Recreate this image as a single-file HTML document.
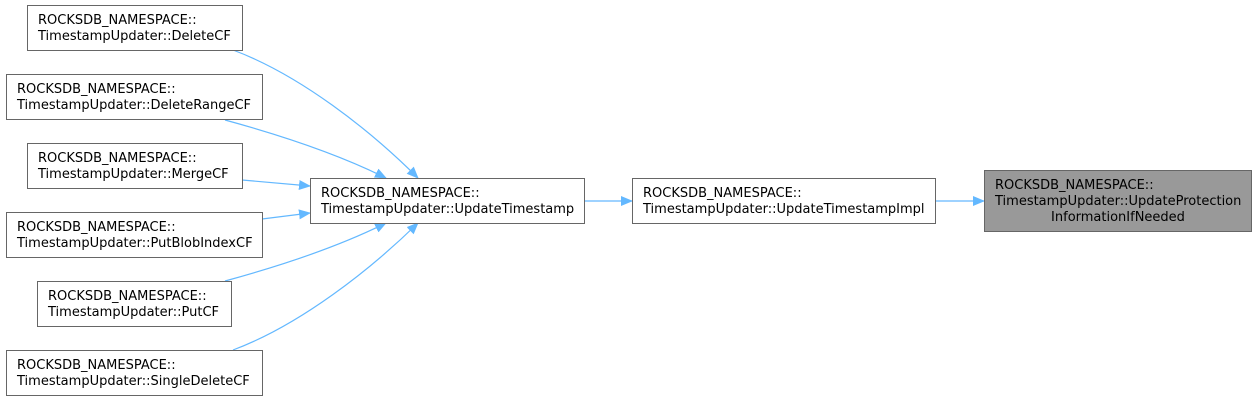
<!DOCTYPE html>
<html><head><meta charset="utf-8"><style>
html,body{margin:0;padding:0;background:#fff;}
svg text{font-family:"DejaVu Sans","Liberation Sans",sans-serif;font-size:13px;fill:#000;}
</style></head><body>
<svg width="1257" height="402" viewBox="0 0 1257 402" xmlns="http://www.w3.org/2000/svg">
<defs><marker id="a" markerWidth="12" markerHeight="12" refX="11" refY="6" orient="auto" markerUnits="userSpaceOnUse"><path d="M0,1 L12,6 L0,11 Z" fill="#63b8ff"/></marker></defs>
<g fill="none" stroke="#63b8ff" stroke-width="1.2" marker-end="url(#a)">
<path d="M233,50 C300,75 370,130 418,178"/>
<path d="M225,120 C280,135 340,155 386,178"/>
<path d="M242,180 L310,186"/>
<path d="M262,219 L310,213"/>
<path d="M225,281 C280,266 340,246 386,223"/>
<path d="M233,350 C300,325 370,270 418,223"/>
<path d="M584,201 L632,201"/>
<path d="M935,201 L984,201"/>
</g>
<g fill="#fff" stroke="#666" stroke-width="1">
<rect x="27.5" y="5.5" width="215" height="45"/>
<rect x="6.5" y="74.5" width="256" height="45"/>
<rect x="27.5" y="143.5" width="215" height="45"/>
<rect x="6.5" y="212.5" width="256" height="45"/>
<rect x="37.5" y="281.5" width="194" height="45"/>
<rect x="6.5" y="350.5" width="256" height="45"/>
<rect x="310.5" y="178.5" width="274" height="45"/>
<rect x="632.5" y="178.5" width="303" height="45"/>
<rect x="984.5" y="170.5" width="267" height="61" fill="#999"/>
</g>
<text x="38" y="24">ROCKSDB_NAMESPACE::</text><text x="38" y="40">TimestampUpdater::DeleteCF</text>
<text x="17" y="93">ROCKSDB_NAMESPACE::</text><text x="17" y="109">TimestampUpdater::DeleteRangeCF</text>
<text x="38" y="162">ROCKSDB_NAMESPACE::</text><text x="38" y="178">TimestampUpdater::MergeCF</text>
<text x="17" y="231">ROCKSDB_NAMESPACE::</text><text x="17" y="247">TimestampUpdater::PutBlobIndexCF</text>
<text x="48" y="300">ROCKSDB_NAMESPACE::</text><text x="48" y="316">TimestampUpdater::PutCF</text>
<text x="17" y="369">ROCKSDB_NAMESPACE::</text><text x="17" y="385">TimestampUpdater::SingleDeleteCF</text>
<text x="321" y="197">ROCKSDB_NAMESPACE::</text><text x="321" y="213">TimestampUpdater::UpdateTimestamp</text>
<text x="643" y="197">ROCKSDB_NAMESPACE::</text><text x="643" y="213">TimestampUpdater::UpdateTimestampImpl</text>
<text x="995" y="189">ROCKSDB_NAMESPACE::</text><text x="995" y="205">TimestampUpdater::UpdateProtection</text><text x="1118" y="221" text-anchor="middle">InformationIfNeeded</text>
</svg>
</body></html>
